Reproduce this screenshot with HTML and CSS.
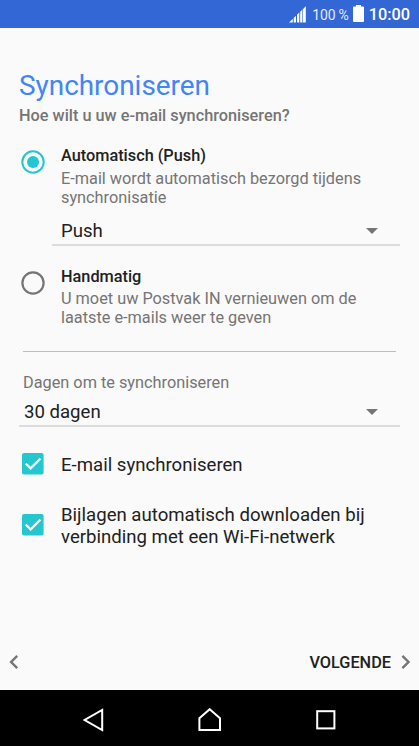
FILE: index.html
```html
<!DOCTYPE html>
<html lang="nl">
<head>
    <meta charset="UTF-8">
    <meta name="viewport" content="width=device-width, initial-scale=1.0">
    <title>Synchroniseren</title>
    <link rel="stylesheet" href="styles.css">
</head>
<body>
    <div class="screen">
        <header class="status-bar">
            <svg class="signal" width="17" height="17" viewBox="0 0 17 17" fill="#fff">
                <path d="M0 16.5L3.8 12.9V16.5ZM4.7 12L7 9.8V16.5H4.7ZM8 8.8L10.3 6.6V16.5H8ZM11.2 5.8L13.2 3.8V16.5H11.2ZM13.8 3.2L16.8 .2V16.5H13.8Z"/>
            </svg>
            <span class="percent">100 %</span>
            <svg class="battery" width="11" height="17" viewBox="0 0 11 17" fill="#fff">
                <path d="M3 0H8V1.5H10Q11 1.5 11 2.5V16Q11 17 10 17H1Q0 17 0 16V2.5Q0 1.5 1 1.5H3Z"/>
            </svg>
            <span class="clock">10:00</span>
        </header>

        <main class="content">
            <h1>Synchroniseren</h1>
            <p class="subtitle">Hoe wilt u uw e-mail synchroniseren?</p>

            <div class="option option-push">
                <svg class="radio" width="24" height="24" viewBox="0 0 24 24">
                    <circle cx="12" cy="12" r="10.7" fill="none" stroke="#24c7d0" stroke-width="2"/>
                    <circle cx="12" cy="12" r="6" fill="#24c7d0"/>
                </svg>
                <div class="option-text">
                    <h2>Automatisch (Push)</h2>
                    <p>E-mail wordt automatisch bezorgd tijdens<br>synchronisatie</p>
                </div>
            </div>
            <div class="spinner spinner-push">
                <span>Push</span>
                <svg width="12" height="6" viewBox="0 0 12 6"><path d="M0 0H12L6 6Z" fill="#757575"/></svg>
            </div>

            <div class="option option-manual">
                <svg class="radio" width="24" height="24" viewBox="0 0 24 24">
                    <circle cx="12" cy="12" r="10.6" fill="none" stroke="#757575" stroke-width="2.2"/>
                </svg>
                <div class="option-text">
                    <h2>Handmatig</h2>
                    <p>U moet uw Postvak IN vernieuwen om de<br>laatste e-mails weer te geven</p>
                </div>
            </div>

            <hr>

            <p class="label">Dagen om te synchroniseren</p>
            <div class="spinner spinner-days">
                <span>30 dagen</span>
                <svg width="12" height="6" viewBox="0 0 12 6"><path d="M0 0H12L6 6Z" fill="#757575"/></svg>
            </div>

            <div class="check check-mail">
                <svg width="22" height="22" viewBox="0 0 22 22">
                    <rect width="21.6" height="21.6" rx="2" fill="#24c7d0"/>
                    <path d="M3.7 10.5L8.6 15.4L18.4 5.6" fill="none" stroke="#fff" stroke-width="2.2"/>
                </svg>
                <span>E-mail synchroniseren</span>
            </div>
            <div class="check check-attachments">
                <svg width="22" height="22" viewBox="0 0 22 22">
                    <rect width="21.6" height="21.6" rx="2" fill="#24c7d0"/>
                    <path d="M3.7 10.5L8.6 15.4L18.4 5.6" fill="none" stroke="#fff" stroke-width="2.2"/>
                </svg>
                <span>Bijlagen automatisch downloaden bij<br>verbinding met een Wi-Fi-netwerk</span>
            </div>
        </main>

        <div class="actions">
            <svg width="10" height="14" viewBox="0 0 10 14" fill="none" stroke="#757575" stroke-width="2.4">
                <path d="M8.2 .9L2.1 7L8.2 13.1"/>
            </svg>
            <div class="next">
                <span>VOLGENDE</span>
                <svg width="10" height="14" viewBox="0 0 10 14" fill="none" stroke="#757575" stroke-width="2.4">
                    <path d="M1.4 .9L7.5 7L1.4 13.1"/>
                </svg>
            </div>
        </div>

        <nav class="nav-bar">
            <svg width="24" height="24" viewBox="0 0 24 24"><path d="M20.2 2V22L2.6 12Z"/></svg>
            <svg width="24" height="24" viewBox="0 0 24 24"><path d="M11.7 1.2L22 10.2V21.9H1.4V10.2Z"/></svg>
            <svg width="24" height="24" viewBox="0 0 24 24"><rect x="3.2" y="3.2" width="17.2" height="17.2"/></svg>
        </nav>
    </div>
</body>
</html>
```
FILE: styles.css
```css
* {
    box-sizing: border-box;
}
body {
    margin: 0;
    font-family: Roboto, sans-serif;
    background-color: #fafafa;
    color: #212121;
}
h1, h2, p {
    margin: 0;
}
svg {
    display: block;
    flex: none;
}
.screen {
    display: flex;
    flex-direction: column;
    height: 746px;
    overflow: hidden;
}
.status-bar {
    display: flex;
    justify-content: flex-end;
    align-items: center;
    height: 28px;
    padding-right: 9px;
    background-color: #3367d6;
    color: #fff;
    white-space: nowrap;
}
.percent {
    margin: 1px 4px 0 6px;
    font-size: 14px;
    letter-spacing: -0.2px;
    color: #e4ebfa;
}
.battery {
    margin: 0 5px 1px 0;
}
.clock {
    font-size: 16.3px;
    font-weight: 500;
    margin-top: 1px;
}
.content {
    flex: 1;
    padding: 41px 19px 0;
}
h1 {
    font-size: 27.9px;
    font-weight: 400;
    line-height: 34px;
    color: #4285f4;
}
.subtitle {
    margin-top: 3px;
    font-size: 16.3px;
    font-weight: 500;
    line-height: 20px;
    color: #757575;
}
.option {
    display: flex;
    gap: 16px;
    padding-left: 2px;
}
.option-push {
    margin-top: 20px;
}
.option-push p {
    margin-top: 4px;
}
.radio {
    margin-top: 4.3px;
}
h2 {
    font-size: 16.3px;
    font-weight: 500;
    line-height: 19px;
}
.option-text p {
    font-size: 16.3px;
    line-height: 19px;
    color: #757575;
    white-space: nowrap;
}
.spinner {
    display: flex;
    justify-content: space-between;
    align-items: center;
    border-bottom: 2px solid #dcdcdc;
    font-size: 18.6px;
    line-height: 22px;
}
.spinner svg {
    margin-right: 22px;
}
.spinner-push {
    margin: 13px 0 0 33px;
    padding: 0 0 2px 9px;
}
.option-manual {
    margin-top: 21px;
}
.option-manual p {
    margin-top: 3px;
}
hr {
    height: 1px;
    margin: 24px 4px 0;
    border: 0;
    background-color: #bdbdbd;
}
.label {
    margin: 21px 0 0 4px;
    font-size: 16.3px;
    line-height: 20px;
    color: #757575;
}
.spinner-days {
    margin-top: 8px;
    padding: 0 0 2px 5px;
}
.check {
    display: flex;
    align-items: center;
    gap: 17px;
    padding-left: 3px;
    font-size: 18.6px;
    line-height: 22px;
    white-space: nowrap;
}
.check svg {
    margin-bottom: 2px;
}
.check-mail {
    margin-top: 26px;
}
.check-attachments {
    margin-top: 27px;
}
.actions {
    display: flex;
    justify-content: space-between;
    align-items: center;
    height: 56px;
    padding: 0 8px 0 9px;
}
.next {
    display: flex;
    align-items: center;
    gap: 10px;
    font-size: 16.3px;
    font-weight: 500;
}
.nav-bar {
    display: flex;
    justify-content: center;
    gap: 92px;
    align-items: center;
    height: 56px;
    padding-top: 3px;
    background-color: #000;
}
.nav-bar svg {
    fill: none;
    stroke: #fff;
    stroke-width: 2;
}
```
